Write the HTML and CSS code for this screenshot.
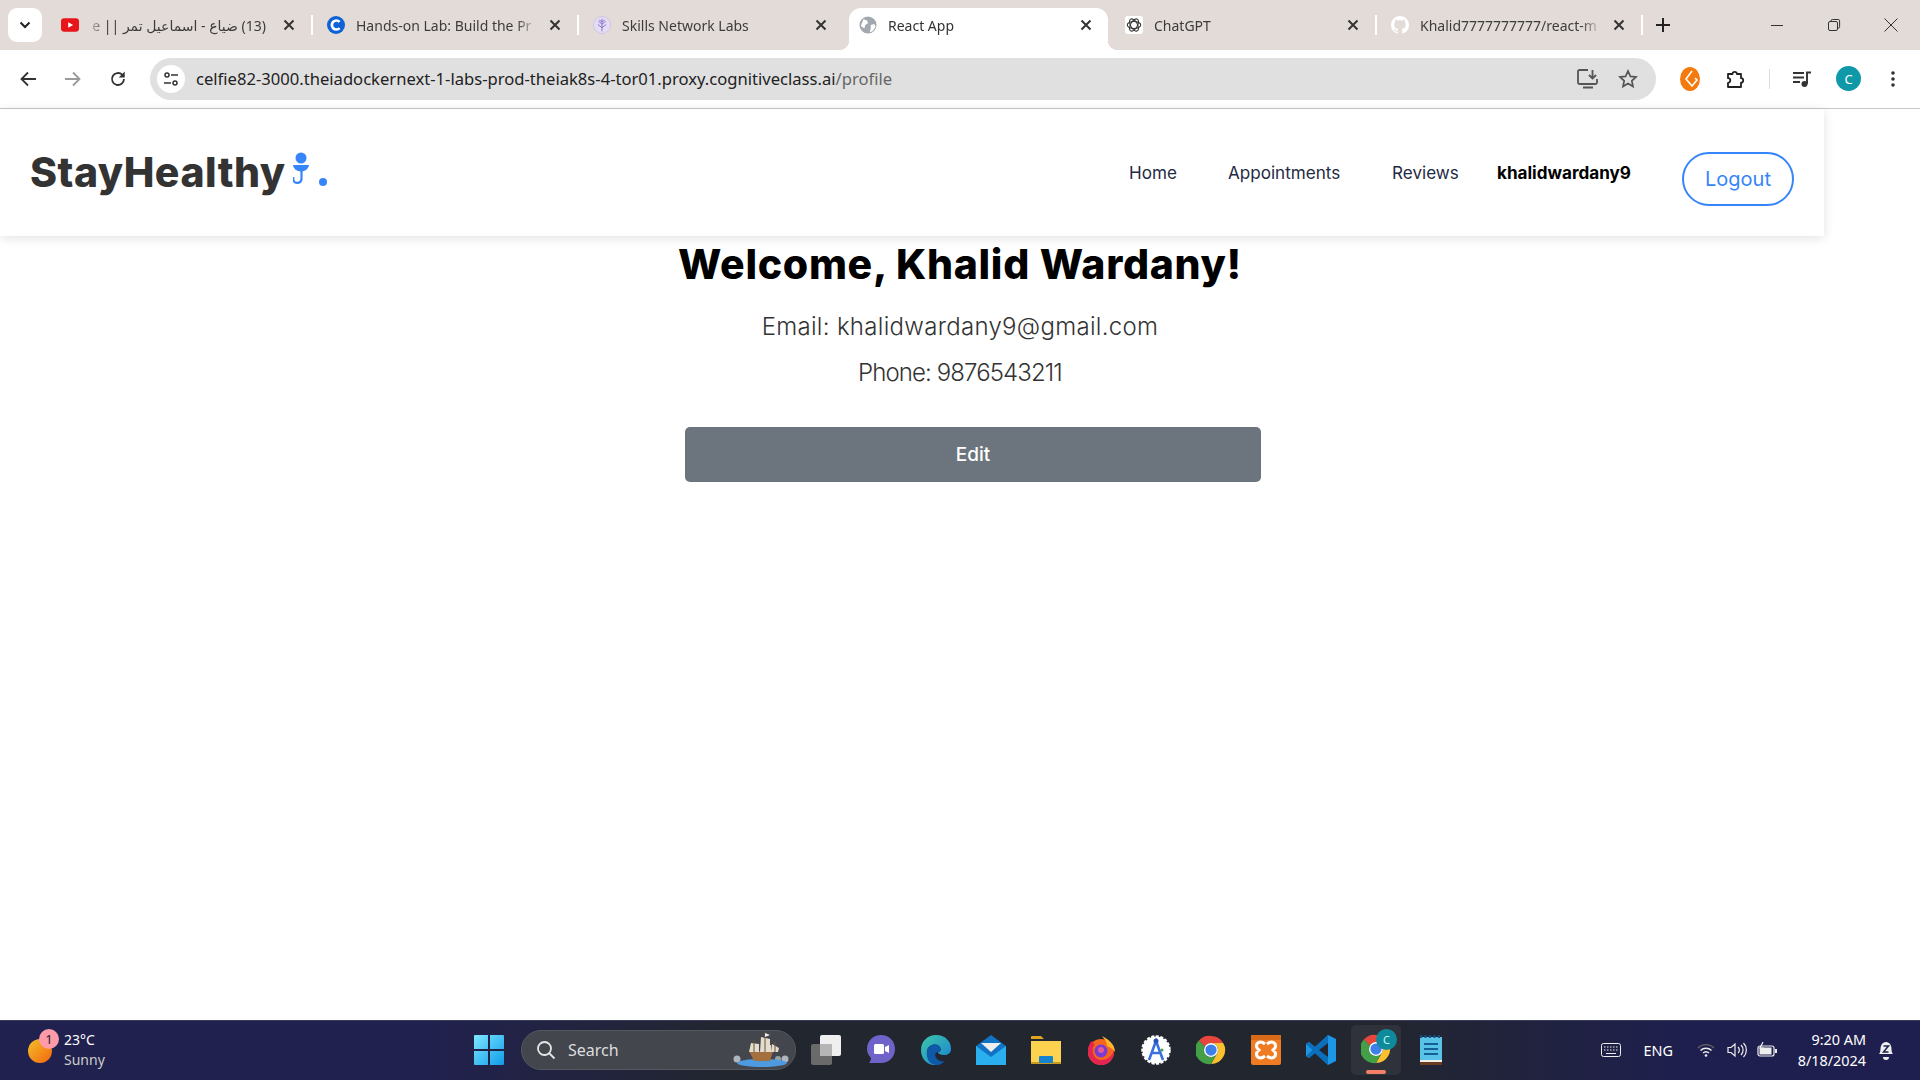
FILE: index.html
```html
<!DOCTYPE html>
<html lang="en">
<head>
<meta charset="utf-8">
<title>React App</title>
<link rel="stylesheet" href="styles.css">
</head>
<body>
<svg class="defs" width="0" height="0" aria-hidden="true">
  <symbol id="chrome" viewBox="0 0 32 32">
    <path d="M16 1a15 15 0 0 1 13 7.5H16a7.5 7.5 0 0 0-6.5 3.75L3 5.9A15 15 0 0 1 16 1z" fill="#e8453c"/>
    <path d="M29 8.500a15 15 0 0 1-13 22.500l6.500-11.250A7.500 7.500 0 0 0 22.500 12.250 7.500 7.500 0 0 0 16 8.500z" fill="#fbc02d"/>
    <path d="M3 5.900l6.500 6.350A7.500 7.500 0 0 0 16 23.500a7.500 7.500 0 0 0 6.500-3.750L16 31A15 15 0 0 1 3 5.900z" fill="#43a047"/>
    <circle cx="16" cy="16" r="7.500" fill="#fff"/>
    <circle cx="16" cy="16" r="6" fill="#3f7fe8"/>
  </symbol>
  <symbol id="x" viewBox="0 0 12 12">
    <path d="M1.500 1.500l9 9M10.500 1.500l-9 9" stroke="#333" stroke-width="2" fill="none"/>
  </symbol>
</svg>

<div class="tabstrip">
  <div class="tabsearch"><svg width="12" height="8" viewBox="0 0 12 8"><path d="M1.500 1.500 6 6l4.500-4.500" fill="none" stroke="#222" stroke-width="2"/></svg></div>
  <div class="tab">
    <svg class="fav" viewBox="0 0 20 16"><rect width="20" height="15" y=".5" rx="3.500" fill="#e8151b"/><path d="M8 5l5.500 3L8 11z" fill="#fff"/></svg>
    <span class="label label-rtl" dir="rtl">(13) ضياع - اسماعيل تمر || e</span>
    <svg class="close"><use href="#x"/></svg>
  </div>
  <i class="sep"></i>
  <div class="tab">
    <svg class="fav" viewBox="0 0 20 20"><circle cx="10" cy="10" r="10" fill="#0f62d6"/><path d="M14 6.500a5 5 0 1 0 0 7" fill="none" stroke="#fff" stroke-width="3"/></svg>
    <span class="label">Hands-on Lab: Build the Pr</span>
    <svg class="close"><use href="#x"/></svg>
  </div>
  <i class="sep"></i>
  <div class="tab">
    <svg class="fav" viewBox="0 0 20 20"><circle cx="10" cy="10" r="9.500" fill="#e4dcf2" stroke="#cfc3e8"/><path d="M10 3v14M6 6l4 3 4-3M5.500 9.500 10 13l4.500-3.500M7 4.500l3 2 3-2" fill="none" stroke="#8a76d2" stroke-width="1.100"/></svg>
    <span class="label">Skills Network Labs</span>
    <svg class="close"><use href="#x"/></svg>
  </div>
  <div class="tab tab-active">
    <svg class="fav" viewBox="0 0 20 20"><circle cx="10" cy="10" r="9.500" fill="#a1a8b0"/><path d="M5 3.500l4 1.500 1 3-3 2-1 4-4-3zM13 10l4-1 1.500 3-3.500 5-3 1 1-4z" fill="#fff"/></svg>
    <span class="label">React App</span>
    <svg class="close"><use href="#x"/></svg>
  </div>
  <div class="tab">
    <svg class="fav" viewBox="0 0 20 20"><rect width="20" height="20" rx="3" fill="#fff"/><g fill="none" stroke="#333" stroke-width="1.200"><ellipse cx="10" cy="10" rx="7.500" ry="3.800"/><ellipse cx="10" cy="10" rx="7.500" ry="3.800" transform="rotate(60 10 10)"/><ellipse cx="10" cy="10" rx="7.500" ry="3.800" transform="rotate(120 10 10)"/></g></svg>
    <span class="label">ChatGPT</span>
    <svg class="close"><use href="#x"/></svg>
  </div>
  <i class="sep"></i>
  <div class="tab">
    <svg class="fav" viewBox="0 0 16 16"><path fill="#fff" d="M8 0C3.580 0 0 3.580 0 8c0 3.540 2.290 6.530 5.470 7.590.4.07.55-.17.55-.38 0-.19-.01-.82-.01-1.490-2.010.37-2.530-.49-2.690-.94-.09-.23-.48-.94-.82-1.130-.28-.15-.68-.52-.01-.53.63-.01 1.080.58 1.230.82.72 1.210 1.870.87 2.330.66.07-.52.28-.87.51-1.070-1.780-.2-3.640-.89-3.640-3.950 0-.87.31-1.590.82-2.150-.08-.2-.36-1.020.08-2.120 0 0 .67-.21 2.200.82.64-.18 1.320-.27 2-.27.68 0 1.360.09 2 .27 1.530-1.040 2.200-.82 2.200-.82.44 1.100.16 1.920.08 2.120.51.56.82 1.270.82 2.150 0 3.070-1.870 3.750-3.650 3.950.29.25.54.73.54 1.480 0 1.070-.01 1.930-.01 2.200 0 .21.15.46.55.38A8.013 8.013 0 0016 8c0-4.420-3.580-8-8-8z"/></svg>
    <span class="label">Khalid7777777777/react-m</span>
    <svg class="close"><use href="#x"/></svg>
  </div>
  <i class="sep"></i>
  <svg class="newtab" width="14" height="14" viewBox="0 0 14 14"><path d="M7 0v14M0 7h14" stroke="#222" stroke-width="2"/></svg>
  <div class="winctl">
    <svg width="14" height="14" viewBox="0 0 14 14"><path d="M1 7.500h12" stroke="#333" stroke-width="1"/></svg>
    <svg width="14" height="14" viewBox="0 0 14 14"><rect x="1.500" y="3.500" width="9" height="9" rx="1.500" fill="none" stroke="#333"/><path d="M4 3.500V2.800a1.300 1.300 0 0 1 1.300-1.300h6a1.300 1.300 0 0 1 1.300 1.300v6a1.300 1.300 0 0 1-1.300 1.300h-.8" fill="none" stroke="#333"/></svg>
    <svg width="14" height="14" viewBox="0 0 14 14"><path d="M.5.500l13 13M13.500.500l-13 13" stroke="#333" stroke-width="1"/></svg>
  </div>
</div>

<div class="toolbar">
  <svg class="tool" width="18" height="16" viewBox="0 0 18 16"><path d="M9 1.500 2.500 8 9 14.500M2.500 8H17" fill="none" stroke="#333" stroke-width="1.800"/></svg>
  <svg class="tool" width="18" height="16" viewBox="0 0 18 16"><path d="M9 1.500 15.500 8 9 14.500M15.500 8H1" fill="none" stroke="#9a9a9a" stroke-width="1.800"/></svg>
  <svg class="tool" width="18" height="18" viewBox="0 0 18 18"><path d="M15 9a6 6 0 1 1-1.800-4.300L15 6.500" fill="none" stroke="#333" stroke-width="1.800"/><path d="M15.700 1.500v6h-6z" fill="#333"/></svg>
  <div class="omnibox">
    <span class="tune"><svg width="16" height="16" viewBox="0 0 16 16"><g fill="none" stroke="#333" stroke-width="1.500"><circle cx="4" cy="4" r="2"/><path d="M8 4h7M1 12h7"/><circle cx="12" cy="12" r="2"/></g></svg></span>
    <span class="url">celfie82-3000.theiadockernext-1-labs-prod-theiak8s-4-tor01.proxy.cognitiveclass.ai<span class="url-path">/profile</span></span>
    <svg class="install" width="22" height="20" viewBox="0 0 22 20"><path d="M11 1H2.500A1.500 1.500 0 0 0 1 2.500v11A1.500 1.500 0 0 0 2.500 15h16a1.500 1.500 0 0 0 1.500-1.500V10" fill="none" stroke="#555" stroke-width="1.800"/><path d="M6 18.500h10" stroke="#555" stroke-width="2"/><path d="M15.500 1v8M12 6l3.500 3.500L19 6" fill="none" stroke="#555" stroke-width="1.800"/></svg>
    <svg class="star" width="20" height="20" viewBox="0 0 20 20"><path d="M10 2l2.400 5.400 5.600.6-4.200 3.800 1.200 5.700L10 14.600l-5 2.900 1.200-5.700L2 8l5.600-.6z" fill="none" stroke="#555" stroke-width="1.700"/></svg>
  </div>
  <svg class="ext" width="20" height="24" viewBox="0 0 20 24"><ellipse cx="10" cy="12" rx="10" ry="12" fill="#f47a0e"/><path d="M12 4 6 12l6 7 5-6-2-2" fill="none" stroke="#fff" stroke-width="1.600"/></svg>
  <svg class="puzzle" width="20" height="20" viewBox="0 0 20 20"><path d="M2 5h4.500a2.200 2.200 0 1 1 4.400 0H15v4.200a2.200 2.200 0 1 1 0 4.400V18H2v-4.200a2.300 2.300 0 1 0 0-4.600z" fill="none" stroke="#222" stroke-width="1.800" stroke-linejoin="round"/></svg>
  <i class="toolsep"></i>
  <svg class="media" width="20" height="18" viewBox="0 0 20 18"><path d="M1 3h11M1 7.500h11M1 12h7" stroke="#333" stroke-width="1.900"/><path d="M15 14V2.500h4" fill="none" stroke="#333" stroke-width="1.900"/><circle cx="12.500" cy="14" r="3" fill="#333"/></svg>
  <span class="avatar">C</span>
  <svg class="kebab" width="4" height="16" viewBox="0 0 4 16"><circle cx="2" cy="2" r="1.800" fill="#333"/><circle cx="2" cy="8" r="1.800" fill="#333"/><circle cx="2" cy="14" r="1.800" fill="#333"/></svg>
</div>

<div class="viewport">
  <header class="site-header">
    <a class="logo">StayHealthy</a>
    <svg class="logo-mark" width="40" height="44" viewBox="0 0 40 44"><circle cx="8" cy="6" r="5.500" fill="#3685fb"/><path d="M0 13h16a8 6.500 0 0 1-16 0z" fill="#3685fb"/><path d="M8.500 19v8a4.200 4.200 0 0 1-8.200 1v-3" fill="none" stroke="#3685fb" stroke-width="2.200"/><circle cx="30" cy="30" r="4" fill="#3685fb"/></svg>
    <nav class="nav">
      <a class="nav-link nav-home">Home</a>
      <a class="nav-link nav-appt">Appointments</a>
      <a class="nav-link nav-rev">Reviews</a>
      <a class="nav-user">khalidwardany9</a>
      <a class="logout">Logout</a>
    </nav>
  </header>
  <main class="profile">
    <h1 class="welcome">Welcome, Khalid Wardany!</h1>
    <p class="info info-email">Email: khalidwardany9@gmail.com</p>
    <p class="info info-phone">Phone: 9876543211</p>
    <button class="edit" type="button">Edit</button>
  </main>
</div>

<footer class="taskbar">
  <div class="weather">
    <span class="sun"></span>
    <span class="badge">1</span>
    <div class="weather-text"><span>23°C</span><span class="sunny">Sunny</span></div>
  </div>
  <svg class="start" width="30" height="30" viewBox="0 0 30 30"><defs><linearGradient id="w" x1="0" y1="0" x2="1" y2="1"><stop offset="0" stop-color="#7ee8ff"/><stop offset="1" stop-color="#0f9be8"/></linearGradient></defs><path fill="url(#w)" d="M0 1a1 1 0 0 1 1-1h13v14H0zM16 0h13a1 1 0 0 1 1 1v13H16zM0 16h14v14H1a1 1 0 0 1-1-1zM16 16h14v13a1 1 0 0 1-1 1H16z"/></svg>
  <div class="search">
    <svg width="20" height="20" viewBox="0 0 20 20"><circle cx="8.500" cy="8.500" r="6.500" fill="none" stroke="#e6e6e6" stroke-width="1.800"/><path d="M13 13l5.500 5.500" stroke="#e6e6e6" stroke-width="1.800"/></svg>
    <span class="search-text">Search</span>
    <svg class="ship" width="58" height="36" viewBox="0 0 58 36"><circle cx="5" cy="27" r="3.500" fill="#aeb6bd"/><circle cx="53" cy="27" r="3.500" fill="#aeb6bd"/><circle cx="46" cy="27" r="3" fill="#98a2aa"/><ellipse cx="30" cy="31" rx="25" ry="4" fill="#4d9ae0"/><path d="M17 19h24l-3 10H22z" fill="#a4703f"/><path d="M19 11l8 1v8h-10zM29 5l9 2v13H28zM29 13h10v7H28zM40 12l7 4-1 4h-7z" fill="#e4dccc"/><path d="M33 0v20M22 8v12M43 10v10" stroke="#6b5236"/><path d="M33 1l5 2-5 2z" fill="#eee"/></svg>
  </div>
  <div class="apps">
    <svg class="app" viewBox="0 0 30 30"><rect y="9" width="21" height="21" rx="2" fill="#6a6a6a"/><rect x="9" width="21" height="21" rx="2" fill="#efefef"/><rect x="9" y="9" width="12" height="12" fill="#b5b5b5"/></svg>
    <svg class="app" viewBox="0 0 30 30"><path d="M15 0C23 0 29 6 29 14s-6 14-14 14H3c1-1 2-3 2-5C2 20 1 17 1 14 1 6 7 0 15 0z" fill="#6f62c8"/><rect x="8" y="9" width="10" height="10" rx="1.500" fill="#fff"/><path d="M19 12l4-2v8l-4-2z" fill="#fff"/></svg>
    <svg class="app" viewBox="0 0 30 30"><defs><linearGradient id="e" x1="0" y1="0" x2="1" y2="1"><stop offset="0" stop-color="#3cc8a8"/><stop offset="1" stop-color="#1a7fd6"/></linearGradient></defs><path d="M15 0C25 0 30 7 30 14c0 4-3 6-7 6-3 0-6-1-6-3 3 0 4-3 1-6-4-3-11-1-12 5-1 7 5 14 13 14-10 2-19-4-19-15C0 6 7 0 15 0z" fill="url(#e)"/><path d="M6 16c1-6 8-8 12-5 3 3 2 6-1 6-3 0-4 4-1 7 2 2 6 3 8 2-2 2-5 4-8 4-8 0-11-7-10-14z" fill="#0f5aa8"/></svg>
    <svg class="app" viewBox="0 0 30 30"><path d="M15 0l15 11v19H0V11z" fill="#1273c4"/><path d="M0 11l15 11 15-11v19H0z" fill="#2ab0ee"/><path d="M5 8h20l-10 9z" fill="#eee"/></svg>
    <svg class="app" viewBox="0 0 30 30"><path d="M0 2a1 1 0 0 1 1-1h9l3 3H0z" fill="#dfa51f"/><path d="M0 6h30v23H0z" fill="#fcd24f"/><rect y="27" width="30" height="2" fill="#c79a22"/><rect x="8" y="21" width="14" height="7" rx="1" fill="#1583d0"/></svg>
    <svg class="app" viewBox="0 0 30 30"><circle cx="15" cy="17" r="13" fill="#f5651e"/><path d="M16 1c6 3 13 8 13 16-3-4-6-5-8-6 0-4-2-6-5-10z" fill="#fdb52b"/><path d="M2 17C2 10 4 8 6 6c0 2 2 3 3 3-4 4-3 15 6 16 7 0 12-5 13-10 1 9-6 15-13 15S2 25 2 17z" fill="#e3254f"/><circle cx="15" cy="16" r="6.500" fill="#7a3bd1"/><circle cx="15" cy="15" r="3" fill="#e35a9a"/></svg>
    <svg class="app" viewBox="0 0 30 30"><circle cx="15" cy="15" r="13.500" fill="#fff" stroke="#fff" stroke-width="2.500" stroke-dasharray="3 1.500"/><path d="M8 25 15 6l7 19M10 18h10" fill="none" stroke="#3a6fe0" stroke-width="2.600"/><circle cx="15" cy="6" r="2.500" fill="#2456b8"/><circle cx="21" cy="15" r="1.500" fill="#3ca55c"/></svg>
    <svg class="app"><use href="#chrome"/></svg>
    <svg class="app" viewBox="0 0 30 30"><rect width="30" height="30" rx="2" fill="#ef7b22"/><rect y="0" width="30" height="5" fill="#d96a18"/><path d="M14 9C9 5 4 8 6 13l2 2-2 2c-2 5 3 8 8 4M16 9c5-4 10-1 8 4l-2 2 2 2c2 5-3 8-8 4" fill="none" stroke="#fff" stroke-width="3"/></svg>
    <svg class="app" viewBox="0 0 30 30"><path d="M22 0l8 4v22l-8 4-13-12-6 5-3-2v-12l3-2 6 5z" fill="#1e96e8"/><path d="M22 0v30L9 18l-6 5-3-2 6.500-6L0 9l3-2 6 5z" fill="#0c6fbb"/><path d="M22 8 13 15l9 7z" fill="#22252e"/></svg>
    <div class="active-app">
      <svg class="chrome-lg"><use href="#chrome"/></svg>
      <span class="c-badge">C</span>
    </div>
    <svg class="app app-note" viewBox="0 0 22 30"><rect y="2" width="22" height="24" fill="#58c3e6"/><rect y="26" width="22" height="4" fill="#6b3d20"/><rect y="25" width="22" height="2" fill="#f2efe8"/><path d="M1 0v3M5.500 0v3M10 0v3M14.500 0v3M19 0v3" stroke="#13507e" stroke-width="2"/><path d="M4 9h14M4 14h14M4 19h14" stroke="#135f96" stroke-width="2.200"/></svg>
  </div>
  <div class="tray">
    <svg width="20" height="14" viewBox="0 0 20 14"><rect x=".5" y=".5" width="19" height="13" rx="2" fill="none" stroke="#eee"/><path d="M3 4h14M3 7h14" stroke="#eee" stroke-dasharray="1.500 1.500"/><path d="M5 10.500h10" stroke="#eee"/></svg>
    <span class="eng">ENG</span>
    <svg class="wifi" width="18" height="14" viewBox="0 0 18 14"><path d="M1 5a11 11 0 0 1 16 0" fill="none" stroke="#666" stroke-width="1.300"/><path d="M3.500 7.500a8 8 0 0 1 11 0M6 10a4.500 4.500 0 0 1 6 0" fill="none" stroke="#eee" stroke-width="1.500"/><circle cx="9" cy="12.500" r="1.300" fill="#eee"/></svg>
    <svg class="vol" width="20" height="16" viewBox="0 0 20 16"><path d="M1 5.500h3L8 2v12l-4-3.500H1z" fill="none" stroke="#eee" stroke-width="1.200"/><path d="M11 5a4 4 0 0 1 0 6M14 3a7 7 0 0 1 0 10M16.500 1a10 10 0 0 1 0 14" fill="none" stroke="#eee" stroke-width="1.200"/></svg>
    <svg class="batt" width="20" height="16" viewBox="0 0 20 16"><rect x="1" y="4" width="16" height="10" rx="2" fill="none" stroke="#eee" stroke-width="1.200"/><rect x="2.500" y="5.500" width="12" height="7" fill="#eee"/><rect x="18" y="7" width="2" height="4" fill="#eee"/><path d="M6 0 3 6h3L4 10" fill="none" stroke="#eee" stroke-width="1.200"/></svg>
    <div class="clock"><span>9:20 AM</span><span>8/18/2024</span></div>
    <svg class="bell" width="18" height="20" viewBox="0 0 18 20"><path d="M2 14c2-2 1-5 2-8s3-4 5-4 4 1 5 4 0 6 2 8z" fill="#eee"/><path d="M6 17h6a3 3 0 0 1-6 0z" fill="#eee"/><path d="M6.500 6h5l-5 6h5" fill="none" stroke="#1f1f4d" stroke-width="1.500"/></svg>
  </div>
</footer>
</body>
</html>
```
FILE: styles.css
```css
* { box-sizing: border-box; }
html, body { margin: 0; padding: 0; height: 100%; }
body {
  width: 1920px;
  height: 1080px;
  overflow: hidden;
  display: flex;
  flex-direction: column;
  background: #fff;
  font-family: "Noto Sans", "DejaVu Sans", sans-serif;
}
.defs { position: absolute; }

/* Tab strip */
.tabstrip {
  height: 50px;
  display: flex;
  align-items: flex-end;
  padding-left: 8px;
  background: #e3dbd8;
  flex: none;
}
.tabsearch {
  width: 34px;
  height: 34px;
  margin: 0 5px 8px 0;
  border-radius: 9px;
  background: #fff;
  display: flex;
  align-items: center;
  justify-content: center;
  flex: none;
}
.tab {
  width: 264px;
  height: 42px;
  flex: none;
  display: flex;
  align-items: center;
  padding: 0 16px 8px 14px;
  font-size: 14px;
  color: #3c3c3c;
  position: relative;
}
.fav { width: 18px; height: 18px; flex: none; }
.label {
  flex: 1;
  min-width: 0;
  margin-left: 11px;
  white-space: nowrap;
  overflow: hidden;
  -webkit-mask-image: linear-gradient(to right, #000 88%, transparent);
  mask-image: linear-gradient(to right, #000 88%, transparent);
}
.label-rtl {
  margin-left: 6px;
  padding-right: 6px;
  font-size: 14px;
  -webkit-mask-image: linear-gradient(to left, #000 88%, transparent);
  mask-image: linear-gradient(to left, #000 88%, transparent);
}
.close { width: 12px; height: 12px; margin-left: 11px; flex: none; }
.sep { width: 2px; height: 20px; margin: 0 0 15px 0; background: #fff; flex: none; }
.tab-active {
  width: 259px;
  padding: 0 16px 8px 10px;
  background: #fff;
  border-radius: 12px 12px 0 0;
  color: #333;
  margin-left: 6px;
  margin-right: 3px;
}
.tab-active::before, .tab-active::after {
  content: "";
  position: absolute;
  bottom: 0;
  width: 10px;
  height: 10px;
}
.tab-active::before { left: -10px; background: radial-gradient(circle at 0 0, transparent 10px, #fff 10.500px); }
.tab-active::after { right: -10px; background: radial-gradient(circle at 100% 0, transparent 10px, #fff 10.500px); }
.newtab { margin: 0 0 18px 13px; flex: none; }
.winctl {
  margin-left: auto;
  width: 128px;
  margin-right: 22px;
  padding-bottom: 18px;
  display: flex;
  justify-content: space-between;
}

/* Toolbar */
.toolbar {
  height: 59px;
  flex: none;
  display: flex;
  align-items: center;
  background: #fff;
  border-radius: 12px 12px 0 0;
  border-bottom: 1px solid #c8c8c8;
  padding: 0 26px 1px 19px;
}
.tool { flex: none; margin-right: 27px; }
.tool:nth-child(3) { margin-right: 23px; }
.omnibox {
  flex: none;
  width: 1506px;
  height: 42px;
  border-radius: 21px;
  background: #e0e0e0;
  display: flex;
  align-items: center;
  padding: 0 18px 0 7px;
}
.tune {
  width: 28px;
  height: 28px;
  border-radius: 50%;
  background: #fff;
  display: flex;
  align-items: center;
  justify-content: center;
  flex: none;
}
.url { margin-left: 11px; font-size: 16.600px; color: #222; white-space: nowrap; flex: 1; }
.url-path { color: #666; }
.install { margin-right: 19px; flex: none; }
.ext { margin-left: 24px; flex: none; }
.puzzle { margin-left: 26px; flex: none; }
.toolsep { width: 1px; height: 20px; background: #e3dbd8; margin: 0 22px 0 23px; flex: none; }
.media { flex: none; }
.avatar {
  width: 25px;
  height: 25px;
  margin-left: 24px;
  border-radius: 50%;
  background: #0f99a8;
  color: #fff;
  font-size: 13px;
  display: flex;
  align-items: center;
  justify-content: center;
  flex: none;
}
.kebab { margin-left: 30px; flex: none; }

/* Page */
.viewport { flex: 1; min-height: 0; }
.site-header {
  width: 1824px;
  height: 127px;
  display: flex;
  align-items: center;
  padding: 0 0 1px 30px;
  box-shadow: 0 2px 10px rgba(0, 0, 0, .12);
  font-family: "Inter", sans-serif;
}
.logo {
  font-size: 41px;
  font-weight: 800;
  color: #333;
  letter-spacing: .5px;
}
.logo-mark { margin: 0 0 -4px 7px; flex: none; }
.nav { margin-left: auto; display: flex; align-items: center; padding-right: 30px; font-size: 17.100px; }
.nav-link { color: #1f2a44; }
.nav-home { width: 99px; }
.nav-appt { width: 164px; }
.nav-rev { width: 105px; }
.nav-user { width: 185px; font-weight: 700; color: #000; }
.logout {
  width: 112px;
  height: 54px;
  margin-top: 14px;
  border: 2px solid #3685fb;
  border-radius: 27px;
  color: #3685fb;
  font-size: 20px;
  display: flex;
  align-items: center;
  justify-content: center;
}
.profile {
  display: flex;
  flex-direction: column;
  align-items: center;
  font-family: "Inter", sans-serif;
}
.welcome {
  margin: 0;
  height: 56px;
  line-height: 56px;
  font-size: 41px;
  font-weight: 800;
  color: #000;
  letter-spacing: .7px;
}
.info { margin: 0; font-size: 24px; font-weight: 300; color: #333; line-height: 34px; }
.info-email { margin-top: 18px; letter-spacing: .3px; }
.info-phone { margin-top: 12px; letter-spacing: -.9px; }
.edit {
  width: 576px;
  height: 55px;
  margin: 37px 0 0 26px;
  border: 0;
  border-radius: 5px;
  background: #6c757d;
  color: #fff;
  font: 500 19px "Inter", sans-serif;
}

/* Taskbar */
.taskbar {
  height: 60px;
  flex: none;
  display: flex;
  align-items: center;
  padding-bottom: 1px;
  color: #fff;
  border-top: 1px solid #3b3b5c;
  background: linear-gradient(to right, #21214f 0, #21214f 22%, #22262f 38%, #22262f 72%, #1f1f4f 88%, #1f1f4f 100%);
}
.weather { width: 474px; height: 100%; display: flex; align-items: center; padding-left: 28px; position: relative; flex: none; }
.sun { width: 24px; height: 24px; margin-top: 1px; border-radius: 50%; background: linear-gradient(135deg, #f2c029, #f5650f); flex: none; }
.badge {
  position: absolute;
  left: 39px;
  top: 8px;
  width: 20px;
  height: 20px;
  border-radius: 50%;
  background: #ff9aa8;
  color: #222;
  font-size: 13px;
  text-align: center;
  line-height: 20px;
}
.weather-text { margin-left: 12px; display: flex; flex-direction: column; font-size: 14px; line-height: 20px; }
.sunny { color: #ccc; }
.start { flex: none; }
.search {
  width: 275px;
  height: 40px;
  margin-left: 17px;
  padding: 0 5px 0 14px;
  border-radius: 20px;
  background: #43464d;
  border: 1px solid #55585f;
  display: flex;
  align-items: center;
  flex: none;
}
.search-text { margin-left: 12px; font-size: 16px; color: #ddd; flex: 1; }
.ship { flex: none; }
.apps { margin-left: 15px; display: flex; align-items: center; flex: none; }
.app { width: 30px; height: 30px; margin-right: 25px; flex: none; }
.active-app {
  width: 50px;
  height: 50px;
  margin: 0 19px 0 -10px;
  border-radius: 5px;
  background: #2f323b;
  position: relative;
  flex: none;
}
.active-app::after {
  content: "";
  position: absolute;
  left: 15px;
  bottom: 1px;
  width: 20px;
  height: 4px;
  border-radius: 2px;
  background: #f28065;
}
.chrome-lg { position: absolute; left: 10px; top: 9px; width: 30px; height: 30px; }
.c-badge {
  position: absolute;
  left: 25px;
  top: 4px;
  width: 21px;
  height: 21px;
  border-radius: 50%;
  background: #0f8a9c;
  color: #bfe;
  font-size: 11px;
  text-align: center;
  line-height: 21px;
}
.app-note { width: 22px; margin-right: 0; }
.tray { margin-left: auto; padding-right: 25px; display: flex; align-items: center; flex: none; font-size: 14.400px; }
.eng { margin-left: 23px; }
.wifi { margin-left: 24px; }
.vol { margin-left: 12px; }
.batt { margin-left: 10px; }
.clock { margin-left: 13px; width: 76px; display: flex; flex-direction: column; align-items: flex-end; line-height: 21px; white-space: nowrap; }
.bell { margin-left: 11px; }
```
